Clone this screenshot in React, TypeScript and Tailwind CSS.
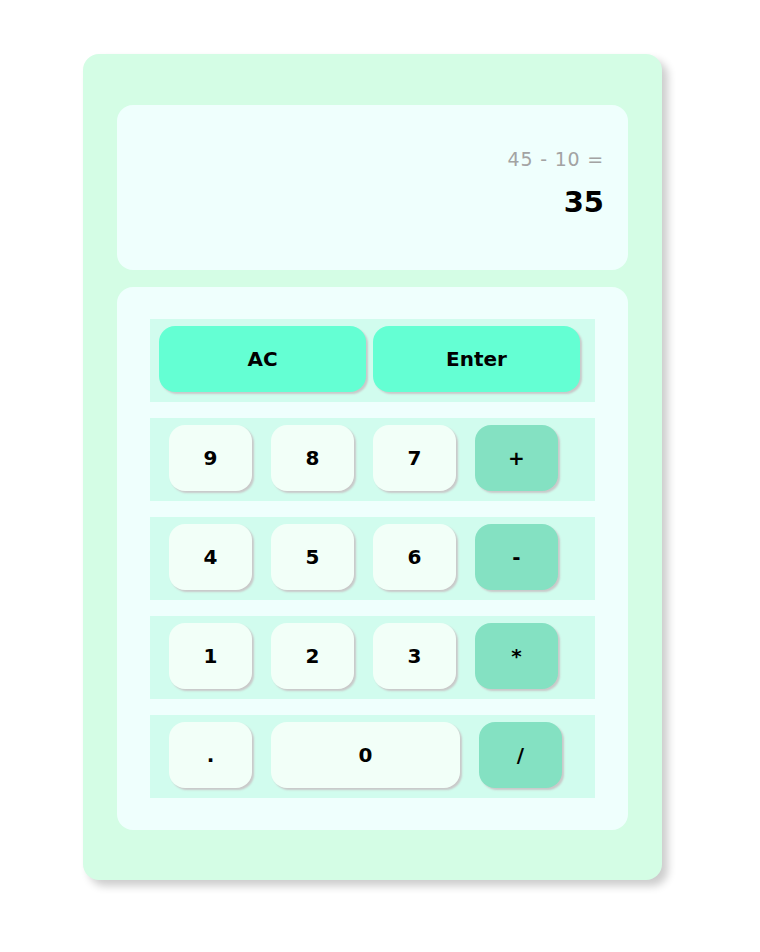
const rows: string[][] = [
  ['9', '8', '7', '+'],
  ['4', '5', '6', '-'],
  ['1', '2', '3', '*'],
]

const keyBase =
  'h-[66px] rounded-[16px] shadow-[2px_2px_2px_#c9c9c9] text-[20px] font-bold text-black flex items-center justify-center'

const Key = ({ label, op, wide }: { label: string; op?: boolean; wide?: boolean }) => (
  <button
    type="button"
    className={`${keyBase} ${wide ? 'w-[189px]' : 'w-[83px]'} ${op ? 'bg-[#84e1c2]' : 'bg-[#f2fff8]'}`}
  >
    {label}
  </button>
)

export default function App() {
  return (
    <div
      className="min-h-[952px] bg-white pt-[54px] pl-[83px]"
      style={{ fontFamily: '"DejaVu Sans", Verdana, sans-serif' }}
    >
      <div className="w-[579px] h-[826px] rounded-[16px] bg-[#d4fde5] shadow-[6px_6px_8px_#cdcdcd] pt-[51px] px-[34px]">
        {/* Pantalla */}
        <div className="h-[165px] rounded-[16px] bg-[#effffd] flex flex-col items-end pr-[24px] pt-[42px]">
          <div className="text-[19px] text-[#a3a3a3] tracking-[0.8px] leading-[24px]">45 - 10 =</div>
          <div className="mt-[14px] text-[29px] font-bold text-black leading-[34px]">35</div>
        </div>

        {/* Teclado */}
        <div className="mt-[17px] h-[543px] rounded-[16px] bg-[#effffd] pt-[32px] px-[33px] flex flex-col gap-[16px]">
          <div className="h-[83px] bg-[#d1fcee] flex items-start pt-[7px] gap-[7px] px-[9px]">
            <button type="button" className={`${keyBase} w-[207px] bg-[#64ffd3]`}>
              AC
            </button>
            <button type="button" className={`${keyBase} w-[207px] bg-[#64ffd3]`}>
              Enter
            </button>
          </div>
          {rows.map((row) => (
            <div key={row.join('')} className="h-[83px] bg-[#d1fcee] flex items-start pt-[7px] gap-[19px] pl-[19px]">
              {row.map((k, i) => (
                <Key key={k} label={k} op={i === 3} />
              ))}
            </div>
          ))}
          <div className="h-[83px] bg-[#d1fcee] flex items-start pt-[7px] gap-[19px] pl-[19px]">
            <Key label="." />
            <Key label="0" wide />
            <Key label="/" op />
          </div>
        </div>
      </div>
    </div>
  )
}
